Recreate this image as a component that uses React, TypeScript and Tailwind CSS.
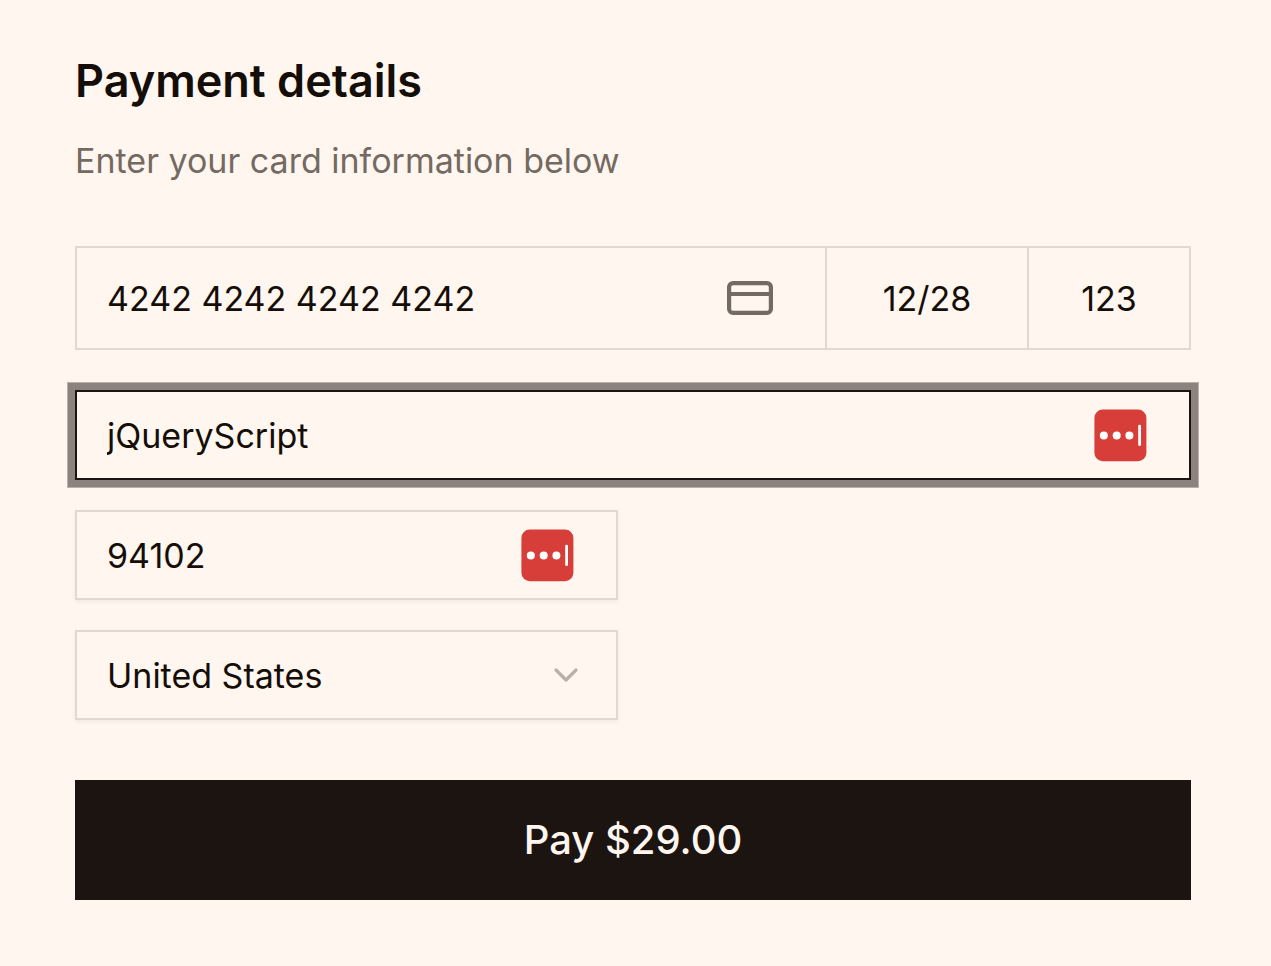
import { useState } from "react";

function FillBadge({ label }: { label: string }) {
  return (
    <button type="button" aria-label={label} className="absolute inset-y-0 right-[43px] my-auto h-[52px] w-[52px]">
      <svg viewBox="0 0 52 52" className="block h-full w-full overflow-visible">
        <rect x="0.4" y="0.6" width="52" height="51.6" rx="8.500" fill="#d73e39" />
        <circle cx="9.8" cy="26.500" r="4" fill="#fff" />
        <circle cx="22.700" cy="26.500" r="4" fill="#fff" />
        <circle cx="35.400" cy="26.500" r="4" fill="#fff" />
        <rect x="44.200" y="15.700" width="2.800" height="21.400" rx="1.300" fill="#fff" />
      </svg>
    </button>
  );
}

export default function App() {
  const [card, setCard] = useState("4242 4242 4242 4242");
  const [expiry, setExpiry] = useState("12/28");
  const [cvc, setCvc] = useState("123");
  const [name, setName] = useState("jQueryScript");
  const [zip, setZip] = useState("94102");

  return (
    <main className="min-h-screen bg-[#fff6ef] pt-[54px] pr-20 pb-14 pl-[75px] font-['Inter',sans-serif] text-[#150e08]">
      <form onSubmit={(e) => e.preventDefault()}>
        <h1 className="text-[45px] leading-[54px] font-semibold">Payment details</h1>
        <p className="mt-7 text-[34px] leading-[50px] text-[#746a61]">Enter your card information below</p>

        <div className="mt-[60px] flex h-[104px] border-2 border-[#e3d8cf] text-[34px]">
          <div className="relative min-w-0 flex-1">
            <input aria-label="Card number" value={card} onChange={(e) => setCard(e.target.value)} className="h-full w-full bg-transparent pr-28 pl-[30px] outline-none" />
            <svg viewBox="0 0 46 34" className="pointer-events-none absolute inset-y-0 right-[52px] my-auto h-[34px] w-[46px]" fill="none" stroke="#746a61" strokeWidth="4.200">
              <rect x="2.100" y="2.100" width="41.800" height="29.800" rx="4" />
              <path d="M2 13h42" />
            </svg>
          </div>
          <input aria-label="Expiry date" value={expiry} onChange={(e) => setExpiry(e.target.value)} className="w-[202px] border-l-2 border-[#e3d8cf] bg-transparent text-center outline-none" />
          <input aria-label="Security code" value={cvc} onChange={(e) => setCvc(e.target.value)} className="w-[162px] border-l-2 border-[#e3d8cf] bg-transparent text-center outline-none" />
        </div>

        <div className="relative mt-10 h-[90px] border-2 border-[#1c1410] text-[34px] shadow-[0_0_0_7px_#8c837e,0_0_0_8px_#b9b0aa]">
          <input aria-label="Name on card" value={name} onChange={(e) => setName(e.target.value)} className="h-full w-full bg-transparent pr-28 pl-[30px] outline-none" />
          <FillBadge label="Fill name" />
        </div>

        <div className="mt-[30px] grid w-[543px] max-w-full gap-[30px] text-[34px]">
          <div className="relative h-[90px] border-2 border-[#e3d8cf] shadow-[0_2px_4px_rgba(0,0,0,0.05)]">
            <input aria-label="ZIP code" value={zip} onChange={(e) => setZip(e.target.value)} className="h-full w-full bg-transparent pr-28 pl-[30px] outline-none" />
            <FillBadge label="Fill ZIP code" />
          </div>
          <div className="relative h-[90px] border-2 border-[#e3d8cf] shadow-[0_2px_4px_rgba(0,0,0,0.05)]">
            <select aria-label="Country" defaultValue="US" className="h-full w-full appearance-none bg-transparent pr-24 pl-[30px] outline-none">
              <option value="US">United States</option>
              <option value="CA">Canada</option>
            </select>
            <svg viewBox="0 0 32 32" className="pointer-events-none absolute inset-y-0 right-[34px] my-auto h-8 w-8" fill="none" stroke="#b9b0aa" strokeWidth="3.200" strokeLinecap="round" strokeLinejoin="round">
              <path d="M6 11l10 10 10-10" />
            </svg>
          </div>
        </div>

        <button type="submit" className="mt-[60px] h-[120px] w-full bg-[#1c1410] text-[40px] font-medium text-[#fff6ef]">Pay $29.00</button>
      </form>
    </main>
  );
}
